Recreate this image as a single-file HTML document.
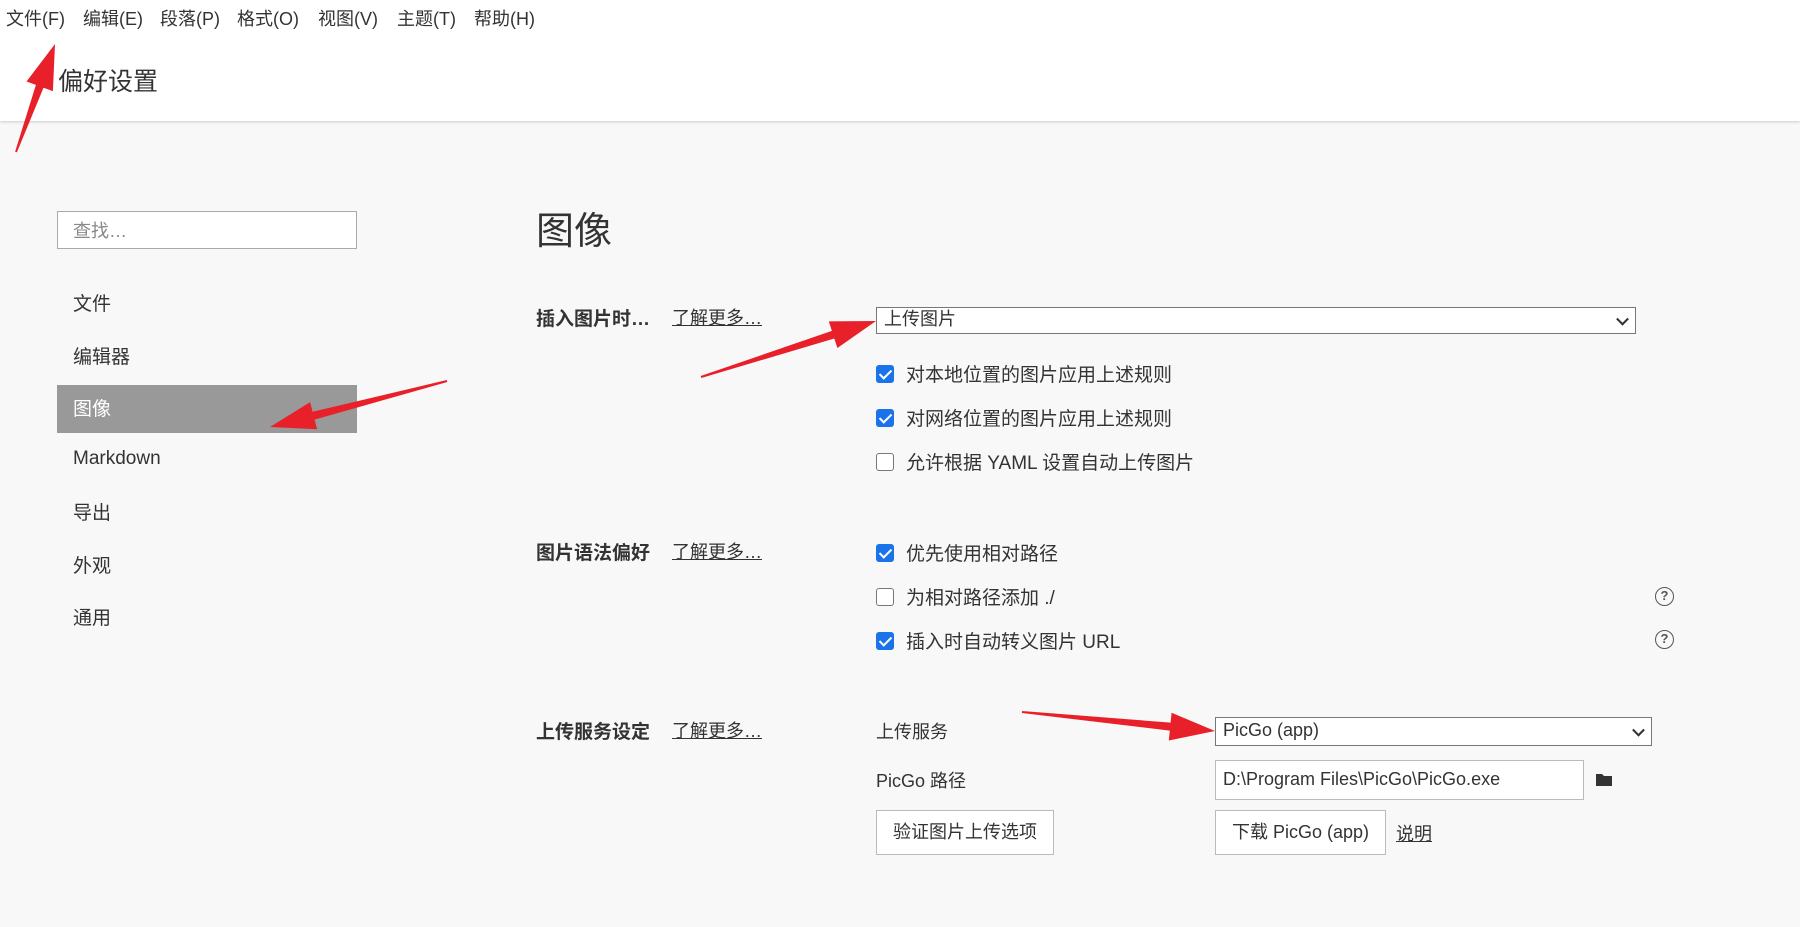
<!DOCTYPE html>
<html><head><meta charset="utf-8"><style>
*{margin:0;padding:0;box-sizing:border-box}
body{width:1800px;height:927px;background:#f8f8f8;font-family:"Liberation Sans","Noto Sans CJK SC",sans-serif;color:#333;position:relative;overflow:hidden}
.a{position:absolute;white-space:nowrap}
#hdr{position:absolute;left:0;top:0;width:1800px;height:121px;background:#fff;box-shadow:0 1px 3px rgba(0,0,0,.18)}
.menu{font-size:18px;color:#333;top:5px}
.side{font-size:19px;left:73px;color:#333}
.lbl{font-size:19px;font-weight:bold;color:#333;left:536px}
.more{font-size:18px;left:672px;text-decoration:underline;color:#333}
.cb{position:absolute;left:876px;width:18px;height:18px;border-radius:3px}
.on{background:#1a73e8}
.on::after{content:"";position:absolute;left:6px;top:2px;width:5px;height:10px;border:solid #fff;border-width:0 2.5px 2.5px 0;transform:rotate(45deg)}
.off{border:1.5px solid #777;background:#fff}
.ct{font-size:19px;left:906px}
.sel{position:absolute;background:#fff;border:1px solid #777;font-size:18px;padding-left:7px}
.chev{position:absolute;right:8px;top:50%;width:9px;height:9px;border:solid #333;border-width:0 2px 2px 0;transform:translateY(-70%) rotate(45deg)}
.btn{position:absolute;background:#fff;border:1px solid #bbb;font-size:18px;display:flex;align-items:center;justify-content:center;padding-bottom:3px}
.help{position:absolute;left:1655px;width:19px;height:19px;border:1.5px solid #555;border-radius:50%;font-size:13px;text-align:center;line-height:16px;color:#555;font-weight:bold}
</style></head><body>
<div id="hdr"></div>
<div class="a menu" style="left:6px">文件(F)</div>
<div class="a menu" style="left:83px">编辑(E)</div>
<div class="a menu" style="left:160px">段落(P)</div>
<div class="a menu" style="left:237px">格式(O)</div>
<div class="a menu" style="left:318px">视图(V)</div>
<div class="a menu" style="left:397px">主题(T)</div>
<div class="a menu" style="left:474px">帮助(H)</div>
<div class="a" style="left:58px;top:62px;font-size:25px;color:#333">偏好设置</div>

<div class="a" style="left:57px;top:211px;width:300px;height:38px;border:1px solid #aaa;background:#fff;font-size:18px;color:#888;padding:5px 15px">查找…</div>
<div class="a side" style="top:289px">文件</div>
<div class="a side" style="top:342px">编辑器</div>
<div class="a" style="left:57px;top:385px;width:300px;height:48px;background:#999"></div>
<div class="a side" style="top:394px;color:#fff">图像</div>
<div class="a side" style="top:448px">Markdown</div>
<div class="a side" style="top:498px">导出</div>
<div class="a side" style="top:551px">外观</div>
<div class="a side" style="top:603px">通用</div>

<div class="a" style="left:536px;top:200px;font-size:38px;color:#333">图像</div>

<div class="a lbl" style="top:304px">插入图片时…</div>
<div class="a more" style="top:304px">了解更多…</div>
<div class="sel" style="left:876px;top:307px;width:760px;height:27px;line-height:23px">上传图片<span class="chev"></span></div>
<div class="cb on" style="top:365px"></div><div class="a ct" style="top:360px">对本地位置的图片应用上述规则</div>
<div class="cb on" style="top:409px"></div><div class="a ct" style="top:404px">对网络位置的图片应用上述规则</div>
<div class="cb off" style="top:453px"></div><div class="a ct" style="top:448px">允许根据 YAML 设置自动上传图片</div>

<div class="a lbl" style="top:538px">图片语法偏好</div>
<div class="a more" style="top:538px">了解更多…</div>
<div class="cb on" style="top:544px"></div><div class="a ct" style="top:539px">优先使用相对路径</div>
<div class="cb off" style="top:588px"></div><div class="a ct" style="top:583px">为相对路径添加 ./</div>
<div class="help" style="top:587px">?</div>
<div class="cb on" style="top:632px"></div><div class="a ct" style="top:627px">插入时自动转义图片 URL</div>
<div class="help" style="top:630px">?</div>

<div class="a lbl" style="top:717px">上传服务设定</div>
<div class="a more" style="top:717px">了解更多…</div>
<div class="a" style="left:876px;top:718px;font-size:18px">上传服务</div>
<div class="sel" style="left:1215px;top:717px;width:437px;height:29px;line-height:25px">PicGo (app)<span class="chev"></span></div>
<div class="a" style="left:876px;top:767px;font-size:18px">PicGo 路径</div>
<div class="sel" style="left:1215px;top:760px;width:369px;height:40px;line-height:36px;border-color:#bbb">D:\Program Files\PicGo\PicGo.exe</div>
<svg class="a" style="left:1595px;top:771px" width="18" height="16" viewBox="0 0 18 16"><path d="M1 3h6l2 2h8v10H1z" fill="#333"/></svg>
<div class="btn" style="left:876px;top:810px;width:178px;height:45px">验证图片上传选项</div>
<div class="btn" style="left:1215px;top:810px;width:171px;height:45px">下载 PicGo (app)</div>
<div class="a" style="left:1396px;top:820px;font-size:18px;text-decoration:underline">说明</div>

<svg class="a" style="left:0;top:0" width="1800" height="927">
<g fill="#e8202a">
<polygon points="16.9,152.3 43.5,87.7 52.9,91.1 55,44 26.5,81.5 35.9,84.9 15.1,151.7"/>
<polygon points="446.7,380 312.6,411.8 310.1,402.1 270,427 317.1,429.3 314.6,419.6 447.3,382"/>
<polygon points="701.3,378 834.3,338.5 837.4,348 876,321 828.8,321.4 831.9,330.9 700.7,376"/>
<polygon points="1021.9,713 1169.8,730.6 1168.8,740.5 1215,731 1171.6,712.7 1170.6,722.6 1022.1,711"/>
</g></svg>
</body></html>
